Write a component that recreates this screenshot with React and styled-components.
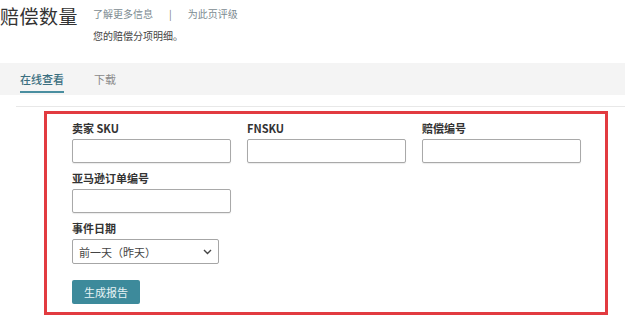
import React from 'react';
import styled, { createGlobalStyle } from 'styled-components';

const GlobalStyle = createGlobalStyle`
  body {
    margin: 0;
    background: #ffffff;
    font-family: "Noto Sans CJK SC", "Noto Sans", "Liberation Sans", sans-serif;
    color: #333;
  }
`;

const Page = styled.div`
  width: 625px;
  height: 326px;
  overflow: hidden;
`;

const Header = styled.header`
  display: flex;
  align-items: flex-start;
  gap: 15px;
  height: 63px;
`;

const Title = styled.h1`
  margin: 3px 0 0;
  font-size: 19px;
  line-height: 26px;
  font-weight: 400;
  color: #333;
  letter-spacing: 0.5px;
`;

const HeaderInfo = styled.div`
  display: flex;
  flex-direction: column;
  gap: 7px;
  padding-top: 6px;
`;

const Links = styled.div`
  display: flex;
  align-items: center;
  gap: 14px;
  font-size: 10px;
  line-height: 16px;
  color: #7c8b91;
`;

const Divider = styled.span`
  color: #777;
  padding: 0 2px;
`;

const Subtitle = styled.p`
  margin: 0;
  font-size: 10px;
  line-height: 14px;
  color: #444;
`;

const TabBar = styled.nav`
  display: flex;
  gap: 30px;
  height: 32px;
  padding-left: 20px;
  background: #f4f4f4;
`;

const Tab = styled.span`
  display: flex;
  align-items: center;
  font-size: 11px;
  color: ${p => (p.$active ? '#3b6f80' : '#8a8a8a')};
  font-weight: ${p => (p.$active ? 500 : 400)};
  border-bottom: 2px solid ${p => (p.$active ? '#4a8ea0' : 'transparent')};
  box-sizing: border-box;
  padding-top: 3px;
  margin-bottom: 2px;
`;

const Content = styled.section`
  margin: 11px 0 0 16px;
  border-top: 1px solid #e8e8e8;
  padding: 4px 0 0 28px;
`;

const Highlight = styled.div`
  width: 564px;
  height: 204px;
  box-sizing: border-box;
  border: 3px solid #e23b40;
  padding: 7px 0 0 25px;
  display: flex;
  flex-direction: column;
  gap: 8px;
`;

const Row = styled.div`
  display: grid;
  grid-template-columns: repeat(3, 159px);
  column-gap: 16px;
`;

const Field = styled.label`
  display: flex;
  flex-direction: column;
  gap: 3px;
`;

const Label = styled.span`
  font-size: 11px;
  line-height: 15px;
  font-weight: 700;
  color: #333;
`;

const Input = styled.input`
  width: 159px;
  height: 24px;
  box-sizing: border-box;
  border: 1px solid #a9a9a9;
  border-radius: 2px;
  box-shadow: 0 1px 1px rgba(0, 0, 0, 0.08);
  background: #fff;
`;

const SelectBox = styled.div`
  width: 147px;
  height: 25px;
  box-sizing: border-box;
  border: 1px solid #a6a6a6;
  border-radius: 2px;
  display: flex;
  align-items: center;
  justify-content: space-between;
  padding: 0 6px;
  font-size: 11px;
  color: #444;
`;

const Button = styled.button`
  margin-top: 8px;
  width: 68px;
  height: 24px;
  border: none;
  border-radius: 2px;
  background: #3d8a9b;
  color: #e8f3f5;
  font-family: inherit;
  font-size: 11px;
  padding: 0;
`;

const Chevron = () => (
  <svg width="9" height="6" viewBox="0 0 9 6" fill="none">
    <path d="M1 1l3.5 3.5L8 1" stroke="#444" strokeWidth="1.4" />
  </svg>
);

const App = () => (
  <Page>
    <GlobalStyle />
    <Header>
      <Title>赔偿数量</Title>
      <HeaderInfo>
        <Links>
          <span>了解更多信息</span>
          <Divider>|</Divider>
          <span>为此页评级</span>
        </Links>
        <Subtitle>您的赔偿分项明细。</Subtitle>
      </HeaderInfo>
    </Header>
    <TabBar>
      <Tab $active>在线查看</Tab>
      <Tab>下载</Tab>
    </TabBar>
    <Content>
      <Highlight>
        <Row>
          <Field>
            <Label>卖家 SKU</Label>
            <Input />
          </Field>
          <Field>
            <Label>FNSKU</Label>
            <Input />
          </Field>
          <Field>
            <Label>赔偿编号</Label>
            <Input />
          </Field>
        </Row>
        <Row>
          <Field>
            <Label>亚马逊订单编号</Label>
            <Input />
          </Field>
        </Row>
        <Field as="div">
          <Label>事件日期</Label>
          <SelectBox>
            <span>前一天（昨天）</span>
            <Chevron />
          </SelectBox>
        </Field>
        <div>
          <Button>生成报告</Button>
        </div>
      </Highlight>
    </Content>
  </Page>
);

export default App;
